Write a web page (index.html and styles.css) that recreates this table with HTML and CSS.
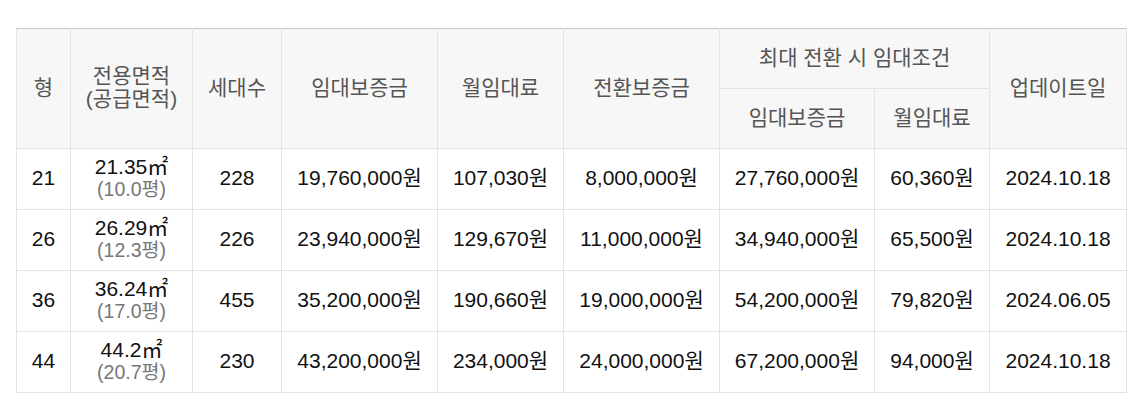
FILE: index.html
```html
<!DOCTYPE html>
<html lang="ko">
<head>
<meta charset="utf-8">
<title>임대조건</title>
<link rel="stylesheet" href="styles.css">
</head>
<body>
<div class="wrap">
<table class="rent">
  <colgroup>
    <col class="c-type"><col class="c-area"><col class="c-units"><col class="c-dep">
    <col class="c-month"><col class="c-conv"><col class="c-maxdep"><col class="c-maxmonth"><col class="c-date">
  </colgroup>
  <thead>
    <tr class="h1">
      <th rowspan="2">형</th>
      <th rowspan="2">전용면적<br>(공급면적)</th>
      <th rowspan="2">세대수</th>
      <th rowspan="2">임대보증금</th>
      <th rowspan="2">월임대료</th>
      <th rowspan="2">전환보증금</th>
      <th colspan="2">최대 전환 시 임대조건</th>
      <th rowspan="2">업데이트일</th>
    </tr>
    <tr class="h2">
      <th>임대보증금</th>
      <th>월임대료</th>
    </tr>
  </thead>
  <tbody>
    <tr>
      <td>21</td>
      <td class="area">21.35㎡<br><span class="py">(10.0평)</span></td>
      <td>228</td>
      <td>19,760,000원</td>
      <td>107,030원</td>
      <td>8,000,000원</td>
      <td>27,760,000원</td>
      <td>60,360원</td>
      <td>2024.10.18</td>
    </tr>
    <tr>
      <td>26</td>
      <td class="area">26.29㎡<br><span class="py">(12.3평)</span></td>
      <td>226</td>
      <td>23,940,000원</td>
      <td>129,670원</td>
      <td>11,000,000원</td>
      <td>34,940,000원</td>
      <td>65,500원</td>
      <td>2024.10.18</td>
    </tr>
    <tr>
      <td>36</td>
      <td class="area">36.24㎡<br><span class="py">(17.0평)</span></td>
      <td>455</td>
      <td>35,200,000원</td>
      <td>190,660원</td>
      <td>19,000,000원</td>
      <td>54,200,000원</td>
      <td>79,820원</td>
      <td>2024.06.05</td>
    </tr>
    <tr>
      <td>44</td>
      <td class="area">44.2㎡<br><span class="py">(20.7평)</span></td>
      <td>230</td>
      <td>43,200,000원</td>
      <td>234,000원</td>
      <td>24,000,000원</td>
      <td>67,200,000원</td>
      <td>94,000원</td>
      <td>2024.10.18</td>
    </tr>
  </tbody>
</table>
</div>
</body>
</html>
```

FILE: styles.css
```css
html, body {
  margin: 0;
  padding: 0;
  background: #fff;
}
.wrap {
  padding: 28px 15px 0 16px;
}
.rent {
  width: 1110px;
  border-collapse: collapse;
  table-layout: fixed;
  font-family: "Liberation Sans", "Noto Sans CJK KR", sans-serif;
  font-size: 21px;
  color: #111;
  border-top: 1px solid #c6c6c6;
}
.c-type { width: 54px; }
.c-area { width: 122px; }
.c-units { width: 89px; }
.c-dep { width: 156px; }
.c-month { width: 126px; }
.c-conv { width: 156px; }
.c-maxdep { width: 155px; }
.c-maxmonth { width: 115px; }
.c-date { width: 137px; }
.rent th, .rent td {
  border: 1px solid #e3e3e3;
  text-align: center;
  vertical-align: middle;
  padding: 0 0 3px;
}
.rent thead tr:first-child th {
  border-top: 1px solid #c6c6c6;
}
.rent th {
  background: #f7f7f7;
  color: #555;
  font-weight: normal;
  line-height: 23px;
  height: 56px;
}
.rent td {
  height: 57px;
  line-height: 22px;
}
.rent .py {
  color: #777;
  font-size: 19.5px;
}
```
